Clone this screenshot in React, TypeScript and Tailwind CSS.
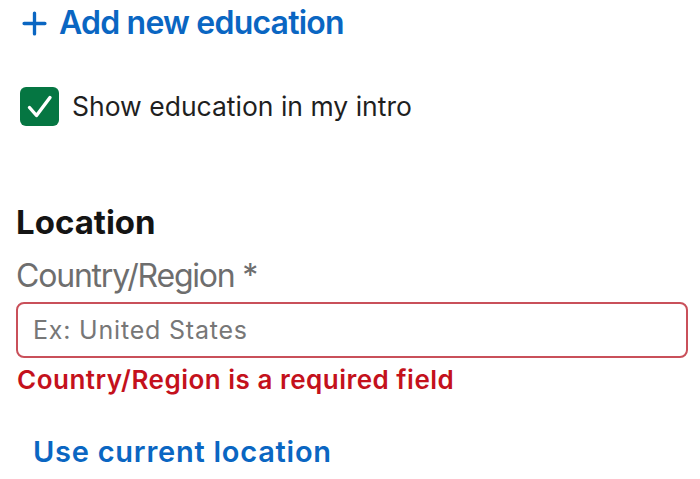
const font = { fontFamily: "Inter, 'Noto Sans', sans-serif" };

export default function App() {
  return (
    <div className="min-h-screen w-full bg-white text-[#1a1a1a]" style={font}>
      <div className="flex flex-col pt-[3px]">
        {/* add new education */}
        <button className="flex h-[40px] items-center pl-[22px] text-left text-[32px] font-semibold leading-[40px] tracking-[-0.8px] text-[#0a66c2]">
          <svg viewBox="0 0 24 24" className="h-[25px] w-[25px]" fill="none" stroke="currentColor" strokeWidth="3.2" strokeLinecap="round">
            <path d="M12 2v20M2 12h20" />
          </svg>
          <span className="ml-[12px]">Add new education</span>
        </button>

        {/* intro checkbox */}
        <label className="mt-[44px] flex h-[39px] items-center pl-[20px]">
          <span className="flex h-[39px] w-[39px] items-center justify-center rounded-[6px] bg-[#057642]">
            <svg viewBox="0 0 39 39" className="h-[39px] w-[39px]" fill="none" stroke="white" strokeWidth="3.4" strokeLinecap="round" strokeLinejoin="round">
              <path d="M9.5 20.5l7 8L30 10.5" />
            </svg>
          </span>
          <span className="ml-[13px] text-[26.5px] leading-[39px] text-[#1f1f1f]">Show education in my intro</span>
        </label>

        {/* location */}
        <h2 className="mt-[76px] pl-[16px] text-[33px] font-bold leading-[40px] text-[#141414]">Location</h2>
        <p className="mt-[14px] pl-[16px] text-[32px] leading-[40px] tracking-[-1.2px] text-[#6e6e6e]">Country/Region *</p>

        <div className="mt-[6px] ml-[16px] mr-[12px] flex h-[56px] items-center rounded-[8px] border-2 border-[#c9505a] px-[15px]">
          <input
            className="w-full bg-transparent text-[25px] leading-[28px] tracking-[0.8px] text-[#1a1a1a] outline-none placeholder:text-[#777777]"
            placeholder="Ex: United States"
            style={font}
          />
        </div>
        <p className="mt-[6px] pl-[17px] text-[26px] font-semibold leading-[32px] tracking-[0.5px] text-[#c4111c]">
          Country/Region is a required field
        </p>

        <button className="mt-[38px] self-start pl-[33px] text-[29px] font-semibold leading-[36px] tracking-[0.75px] text-[#0a66c2]">
          Use current location
        </button>
      </div>
    </div>
  );
}
